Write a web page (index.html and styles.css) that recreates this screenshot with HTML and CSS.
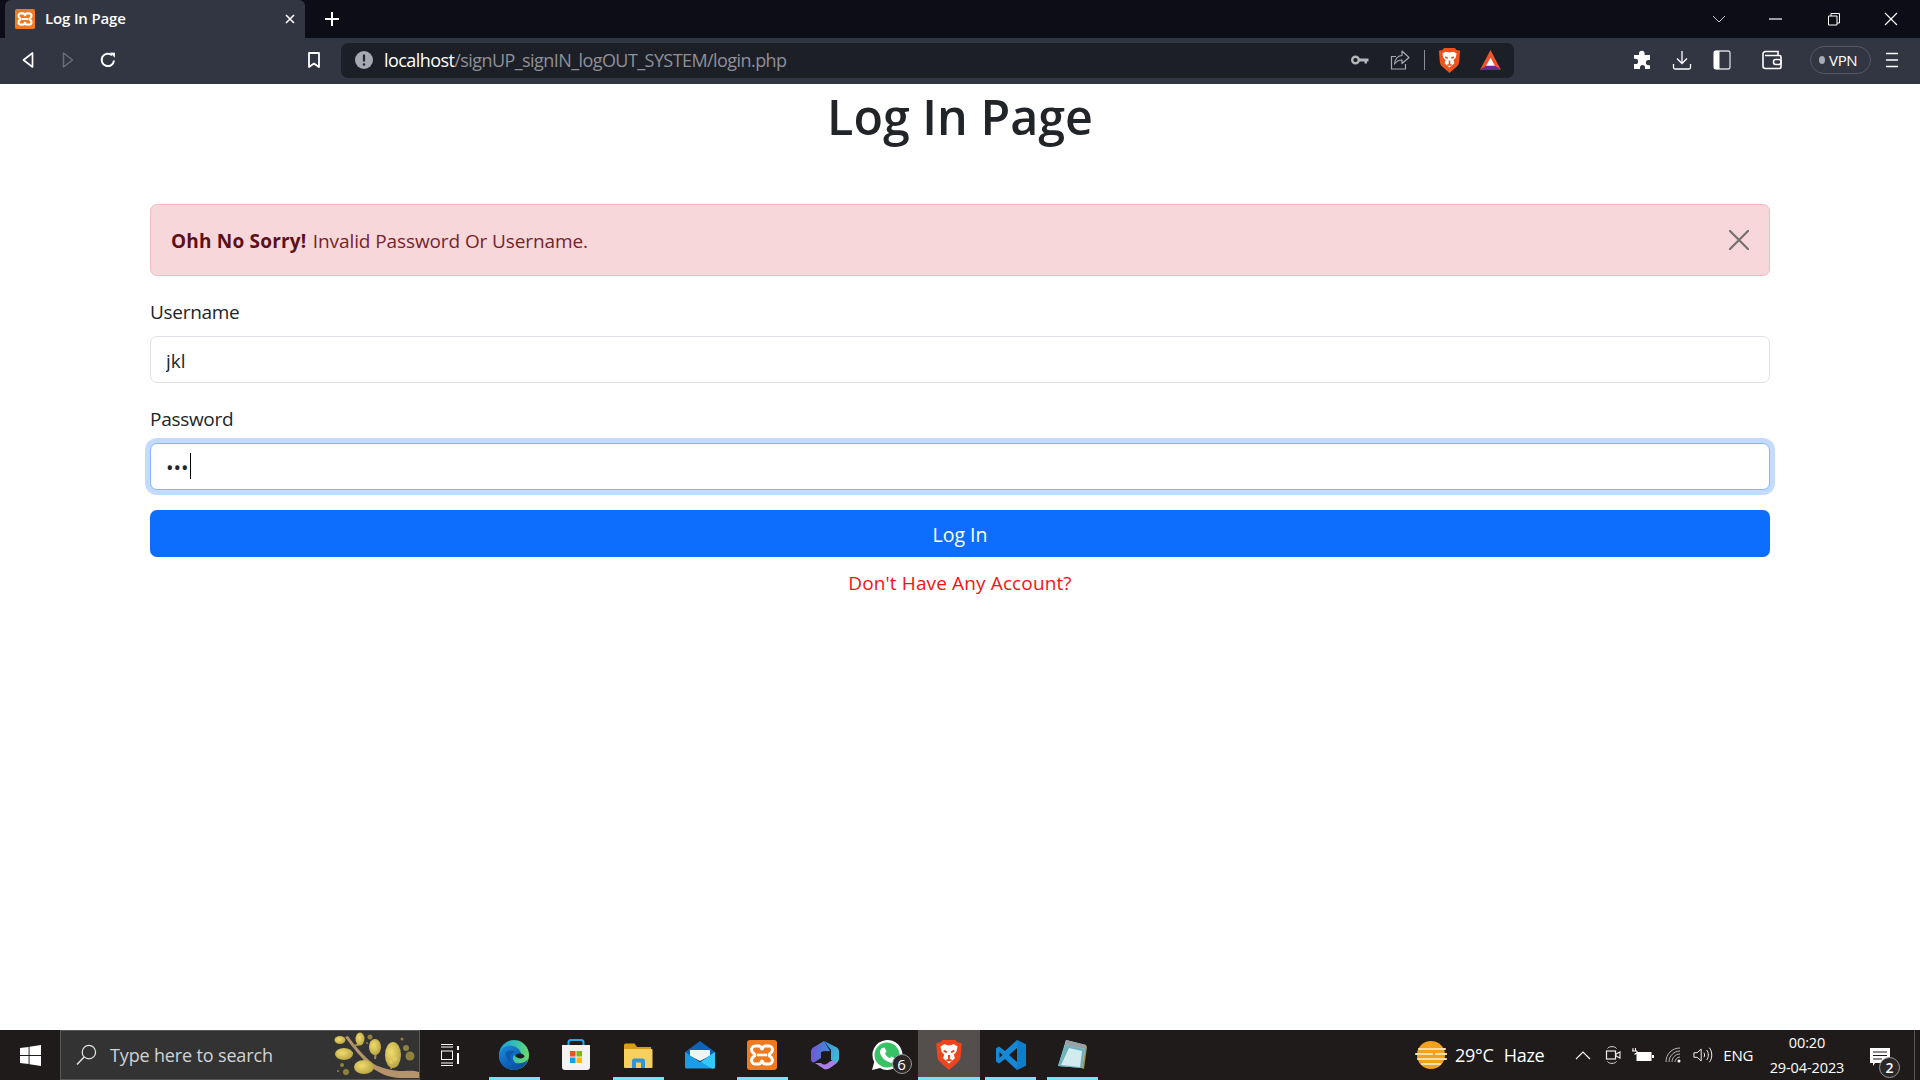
FILE: index.html
```html
<!DOCTYPE html>
<html lang="en">
<head>
<meta charset="utf-8">
<title>Log In Page</title>
<link rel="stylesheet" href="styles.css">
</head>
<body>
<div class="screen">
  <header class="tabstrip">
    <div class="tab">
      <svg class="tab-fav" viewBox="0 0 32 32"><rect width="32" height="32" rx="3" fill="#ef7a20"/><path d="M9 7h4c2.500 0 2 3 3 3s.5-3 3-3h4c3 0 4 3 3 5.500-.8 2-3 2-3 3.500s2.200 1.500 3 3.500c1 2.500 0 5.500-3 5.500h-4c-2.500 0-2-3-3-3s-.5 3-3 3H9c-3 0-4-3-3-5.500.8-2 3-2 3-3.500s-2.200-1.500-3-3.500C5 10 6 7 9 7z" fill="none" stroke="#fff" stroke-width="3.400"/><path d="M11 16h10" stroke="#fff" stroke-width="3"/></svg>
      <span class="tab-title">Log In Page</span>
      <svg class="tab-close" viewBox="0 0 12 12"><path d="M2 2l8 8M10 2l-8 8" stroke="#fff" stroke-width="1.600" fill="none"/></svg>
    </div>
    <svg class="tab-new" viewBox="0 0 16 16"><path d="M8 1v14M1 8h14" stroke="#fff" stroke-width="2" fill="none"/></svg>
    <div class="tab-fill"></div>
    <svg class="win-ico win-chev" viewBox="0 0 14 8"><path d="M1 1l6 6 6-6" stroke="#c8c8cc" stroke-width="1" fill="none"/></svg>
    <svg class="win-ico win-min" viewBox="0 0 14 14"><path d="M0 7h13" stroke="#fff" stroke-width="1.200"/></svg>
    <svg class="win-ico win-max" viewBox="0 0 14 14"><path d="M1.500 4h8.500v9H1.500zM4 4V1.500h8.500V11H10" stroke="#fff" stroke-width="1" fill="none"/></svg>
    <svg class="win-ico win-x" viewBox="0 0 14 14"><path d="M1 1l12 12M13 1L1 13" stroke="#fff" stroke-width="1.100" fill="none"/></svg>
  </header>

  <nav class="toolbar">
    <svg class="tool tool-back" viewBox="0 0 14 18"><path d="M11.500 2v14L2.500 9z" stroke="#fff" stroke-width="1.700" fill="none" stroke-linejoin="round"/></svg>
    <svg class="tool tool-fwd" viewBox="0 0 14 18"><path d="M2.500 2v14l9-7z" stroke="#6b6e78" stroke-width="1.500" fill="none" stroke-linejoin="round"/></svg>
    <svg class="tool tool-reload" viewBox="0 0 18 18"><path d="M15 9.500A6.200 6.200 0 1 1 13 4.300" stroke="#fff" stroke-width="2" fill="none"/><path d="M11 1.500l5 .3-.2 5z" fill="#fff"/></svg>
    <svg class="tool tool-mark" viewBox="0 0 14 18"><path d="M2 2h10v14l-5-3.600L2 16z" stroke="#fff" stroke-width="1.800" fill="none" stroke-linejoin="round"/></svg>
    <div class="omnibox">
      <svg class="omni-info" viewBox="0 0 18 18"><circle cx="9" cy="9" r="9" fill="#a7a9b0"/><path d="M9 3.500v7" stroke="#24262e" stroke-width="2.200"/><circle cx="9" cy="13.500" r="1.300" fill="#24262e"/></svg>
      <span class="omni-url"><span class="omni-host">localhost</span>/signUP_signIN_logOUT_SYSTEM/login.php</span>
      <span class="omni-fill"></span>
      <svg class="omni-key" viewBox="0 0 18 12"><circle cx="4.500" cy="6" r="3.300" fill="none" stroke="#b5b6ba" stroke-width="2.400"/><path d="M8 4.500h9.500v3H16v2h-2.500v-2H8z" fill="#b5b6ba"/></svg>
      <svg class="omni-share" viewBox="0 0 20 20"><path d="M6 6.500H1.500v12.500h14v-5" stroke="#a8a9ae" stroke-width="1.200" fill="none"/><path d="M12 1l7 6.500-7 6V10c-3.500 0-5.500 1-7.500 4 .4-5 3-8 7.500-8.500z" stroke="#a8a9ae" stroke-width="1.200" fill="none" stroke-linejoin="round"/></svg>
      <span class="omni-sep"></span>
      <svg class="omni-brave" viewBox="0 0 26 30"><path d="M7 1h12l2 2 4 1-1 12c-.3 3-1.500 5-4 7l-7 6-7-6c-2.500-2-3.700-4-4-7L1 4l4-1z" fill="#f0521c"/><path d="M5 7l3.500-2 4.500 1 4.500-1L21 7l-1 5-2.500 2.500 1 3.500L13 23l-5.500-5 1-3.500L6 12z" fill="#fff"/><path d="M8 11l3 1.500M18 11l-3 1.500M13 15v5M10.500 20h5" stroke="#f0521c" stroke-width="1.800" fill="none"/></svg>
      <svg class="omni-bat" viewBox="0 0 24 24"><path d="M12 1L1 22l11-7 11 7z" fill="#f0542a"/><path d="M1 22l11-7 11 7z" fill="#662d91"/><path d="M12 9l-4.500 8.500h9z" fill="#fff"/></svg>
    </div>
    <svg class="tool tool-puzzle" viewBox="0 0 18 20"><path d="M6 3.500a2.800 2.800 0 0 1 5.600 0V5H17v5h-1.500a2.600 2.600 0 0 0 0 5.200H17V19h-5v-1.500a2.500 2.500 0 0 0-5 0V19H1v-5h1.500a2.600 2.600 0 0 0 0-5.200H1V5h5z" fill="#fff"/></svg>
    <svg class="tool tool-dl" viewBox="0 0 20 20"><path d="M10 1v12M5 8.500l5 5 5-5M1.500 14v3.500a1.500 1.500 0 0 0 1.500 1.500h14a1.500 1.500 0 0 0 1.500-1.500V14" stroke="#fff" stroke-width="1.300" fill="none"/></svg>
    <svg class="tool tool-side" viewBox="0 0 18 20"><rect x="1" y="1" width="16" height="18" rx="2" fill="none" stroke="#d8d8dc" stroke-width="1.300"/><rect x="1" y="1" width="5.500" height="18" fill="#fff"/></svg>
    <svg class="tool tool-wallet" viewBox="0 0 20 20"><path d="M3 5.500h14.500a1.500 1.500 0 0 1 1.500 1.500v10a1.500 1.500 0 0 1-1.500 1.500h-14A2.500 2.500 0 0 1 1 16V4a2.500 2.500 0 0 1 2.500-2.500H16V5.500" fill="none" stroke="#fff" stroke-width="1.600"/><rect x="11.500" y="9.500" width="7.500" height="5" rx="2.200" fill="#323643" stroke="#fff" stroke-width="1.600"/></svg>
    <div class="vpn"><span class="vpn-dot"></span><span class="vpn-label">VPN</span></div>
    <svg class="tool tool-menu" viewBox="0 0 12 16"><path d="M0 1.500h12M0 8h12M0 14.500h12" stroke="#fff" stroke-width="1.500"/></svg>
  </nav>

  <main class="page">
    <div class="container">
      <h1 class="heading">Log In Page</h1>
      <div class="alert">
        <span class="alert-text"><strong>Ohh No Sorry!</strong> Invalid Password Or Username.</span>
        <svg class="alert-close" viewBox="0 0 20 20"><path d="M1 1l18 18M19 1L1 19" stroke="#757070" stroke-width="2.200" stroke-linecap="round" fill="none"/></svg>
      </div>
      <form class="form">
        <label class="label">Username</label>
        <input class="input" type="text" value="jkl">
        <label class="label">Password</label>
        <div class="field-focus">
          <input class="input input-focus" type="password" value="abc">
          <span class="caret"></span>
        </div>
        <button class="btn" type="button">Log In</button>
      </form>
      <a class="signup">Don't Have Any Account?</a>
    </div>
  </main>

  <footer class="taskbar">
    <div class="start">
      <svg class="start-logo" viewBox="0 0 22 22"><path d="M0 3.200L9 2v8.500H0zM10 1.800L22 0v10.500H10zM0 11.500h9V20L0 18.800zM10 11.500h12V22l-12-1.800z" fill="#fff"/></svg>
    </div>
    <div class="search">
      <svg class="search-ico" viewBox="0 0 22 22"><circle cx="13.500" cy="8" r="7" fill="none" stroke="#e5e5e5" stroke-width="1.300"/><path d="M8.500 13L1 21" stroke="#e5e5e5" stroke-width="1.500"/></svg>
      <span class="search-text">Type here to search</span>
      <svg class="search-art" viewBox="0 0 90 48">
        <defs><radialGradient id="bl" cx=".4" cy=".4" r=".7"><stop offset="0" stop-color="#efdc70"/><stop offset="1" stop-color="#b49f3c"/></radialGradient></defs>
        <path d="M16 6L19 5C24 12 30 20 42 31 48 36 60 39 70 40 78 40 84 39 90 41V47H70C58 46 50 42 42 36 32 27 24 17 16 6z" fill="#b5946c"/>
        <path d="M24 15L32 13M24 22L16 22M37 30L44 36M46 28L47 20M62 38L64 30" stroke="#a58a5c" stroke-width="2"/>
        <g fill="url(#bl)">
          <ellipse cx="11" cy="9" rx="5.500" ry="4"/><ellipse cx="31" cy="8" rx="4.500" ry="6.500"/><ellipse cx="46" cy="16" rx="6" ry="8"/><ellipse cx="15" cy="23" rx="9" ry="6"/><ellipse cx="35" cy="36" rx="10" ry="7"/><ellipse cx="64" cy="24" rx="8" ry="13"/>
        </g>
        <g fill="#e7d465" opacity=".6"><circle cx="60" cy="20" r="2.500"/><circle cx="66" cy="28" r="2.500"/><circle cx="62" cy="31" r="2"/><circle cx="44" cy="14" r="2"/><circle cx="12" cy="22" r="2"/><circle cx="32" cy="35" r="2.500"/></g>
        <g fill="#9e9040" opacity=".85"><circle cx="41" cy="6" r="2.500"/><circle cx="38" cy="12" r="1"/><circle cx="73" cy="8" r="1.500"/><circle cx="77" cy="17" r="3"/><circle cx="81" cy="25" r="4.500"/><circle cx="13" cy="34" r="2"/><circle cx="17" cy="41" r="3"/><circle cx="9" cy="40" r="1"/></g>
      </svg>
    </div>
    <svg class="taskview" viewBox="0 0 20 22"><path d="M1 .5h12M1 3h12M1 19h12M1 21.500h12" stroke="#fff" stroke-width="1"/><rect x="1.500" y="7" width="11" height="8.500" fill="none" stroke="#fff" stroke-width="1"/><path d="M18 2v4M18 9v11" stroke="#fff" stroke-width="2"/></svg>
    <div class="apps">
      <div class="app app-on">
        <svg class="app-ico" viewBox="0 0 32 32"><defs><linearGradient id="eg" x1="0" y1=".3" x2="1" y2=".5"><stop offset="0" stop-color="#1d9fe0"/><stop offset=".5" stop-color="#35c1b0"/><stop offset="1" stop-color="#6bdc68"/></linearGradient><linearGradient id="eb" x1="0" y1="0" x2=".8" y2="1"><stop offset="0" stop-color="#1a8fdc"/><stop offset=".6" stop-color="#0f62b8"/><stop offset="1" stop-color="#0d4a98"/></linearGradient></defs><circle cx="16" cy="16" r="15" fill="url(#eg)"/><path d="M1 17C2 9 9 5 15 7c5 1 8 5 8 8l-6 1c-3 1-3 6 1 8 4 1 9 0 12-4-2 7-8 11-14 11C7 31 1 25 1 17z" fill="url(#eb)"/><path d="M17 17c1-2 4-3 7-2 3 1 3 3 1 4-3 1-6 0-8-2z" fill="#1f1b1b"/><path d="M8 13c3-2 7-2 9 0-4 1-6 5-4 10-4-2-6-7-5-10z" fill="#0d4a98" opacity=".6"/></svg>
      </div>
      <div class="app">
        <svg class="app-ico" viewBox="0 0 32 32"><path d="M8.500 8V3.500C8.500 2 9.500 1 11 1h10c1.500 0 2.500 1 2.500 2.500V8" fill="none" stroke="#26a9e8" stroke-width="2"/><path d="M2 6h28v22a3 3 0 0 1-3 3H5a3 3 0 0 1-3-3z" fill="#f3f3f3"/><rect x="10" y="12" width="5.500" height="5.500" fill="#f25022"/><rect x="16.500" y="12" width="5.500" height="5.500" fill="#7fba00"/><rect x="10" y="18.500" width="5.500" height="5.500" fill="#00a4ef"/><rect x="16.500" y="18.500" width="5.500" height="5.500" fill="#ffb900"/></svg>
      </div>
      <div class="app app-on">
        <svg class="app-ico" viewBox="0 0 32 32"><path d="M2 6a1.500 1.500 0 0 1 1.500-1.500h9L15 8h14v5H2z" fill="#d99f0f"/><path d="M2 10h27.500a1 1 0 0 1 1 1v17a1 1 0 0 1-1 1H3a1 1 0 0 1-1-1z" fill="#f7cf5e"/><path d="M10 29v-7a2.500 2.500 0 0 1 2.500-2.500h8A2.500 2.500 0 0 1 23 22v7h-4v-5.500h-5V29z" fill="#2f94d8"/></svg>
      </div>
      <div class="app">
        <svg class="app-ico" viewBox="0 0 32 32"><path d="M1 13L16 2l15 11v3H1z" fill="#0f62b6"/><path d="M6 11h20v6L16 22 6 17z" fill="#f1f4f7"/><path d="M1 13l15 10 15-10v15a1.500 1.500 0 0 1-1.500 1.500h-27A1.500 1.500 0 0 1 1 28z" fill="#1c9ee6"/><path d="M31 13v15a1.500 1.500 0 0 1-1.500 1.500H28L17 23z" fill="#35c6fa"/></svg>
      </div>
      <div class="app app-on">
        <svg class="app-ico" viewBox="0 0 32 32"><rect x="1" y="1" width="30" height="30" rx="3" fill="#ef7a20"/><path d="M9 7h4c2.500 0 2 3 3 3s.5-3 3-3h4c3 0 4 3 3 5.500-.8 2-3 2-3 3.500s2.200 1.500 3 3.500c1 2.500 0 5.500-3 5.500h-4c-2.500 0-2-3-3-3s-.5 3-3 3H9c-3 0-4-3-3-5.500.8-2 3-2 3-3.500s-2.200-1.500-3-3.500C5 10 6 7 9 7z" fill="none" stroke="#fff" stroke-width="3"/><path d="M11 16h10" stroke="#fff" stroke-width="2.600"/></svg>
      </div>
      <div class="app">
        <svg class="app-ico" viewBox="0 0 32 32"><defs><linearGradient id="m1" x1="0" y1="0" x2="1" y2="0"><stop offset="0" stop-color="#7258d6"/><stop offset="1" stop-color="#3c8bd9"/></linearGradient><linearGradient id="m2" x1="0" y1="0" x2="1" y2="1"><stop offset="0" stop-color="#3b8ed8"/><stop offset="1" stop-color="#40c3d8"/></linearGradient></defs><path d="M15 2L27 8c2 1 3 2.500 3 5v6c0 2.500-1 4-3 5l-5-3V11z" fill="url(#m2)"/><path d="M15 2L5 8c-2 1-3 2.500-3 5v7c0 3 2 4 4 3l6-4v-6l9-1z" fill="url(#m1)"/><path d="M6 24l9 6c2 1 4 0 6-1l7-5c-3-3-6-3-9 0-3 2-5 2-7 0z" fill="#a97fe6"/><path d="M12 16a4 4 0 0 1 8 0 4 4 0 0 1-8 0z" fill="#1f1b1b"/></svg>
      </div>
      <div class="app">
        <svg class="app-ico" viewBox="0 0 32 32"><path d="M1 31l2.200-8A15 15 0 1 1 9 29z" fill="#fff"/><circle cx="16" cy="16" r="12.500" fill="#37c266"/><path d="M11 9l2.500-.5 2 4-1.500 2c1 2 2.500 3.500 4.500 4.500l2-1.500 4 2-.5 2.500c-1 1.500-3 2-5 1.500-5-1.500-8.500-5-10-9.500-.5-2 .8-4 2-5z" fill="#fff"/></svg>
        <span class="badge">6</span>
      </div>
      <div class="app app-on app-active">
        <svg class="app-ico" viewBox="0 0 26 30"><path d="M7 1h12l2 2 4 1-1 12c-.3 3-1.500 5-4 7l-7 6-7-6c-2.500-2-3.700-4-4-7L1 4l4-1z" fill="#f0451c"/><path d="M5 7l3.500-2 4.500 1 4.500-1L21 7l-1 5-2.500 2.500 1 3.500L13 23l-5.500-5 1-3.500L6 12z" fill="#fff"/><path d="M8 11l3 1.500M18 11l-3 1.500M13 15v5M10.500 20h5" stroke="#f0451c" stroke-width="1.800" fill="none"/></svg>
      </div>
      <div class="app app-on">
        <svg class="app-ico" viewBox="0 0 32 32"><path fill-rule="evenodd" d="M22 1l9 4.500v21L22 31 10 20l-6 4.500-3-2v-13l3-2L10 12zM22 9l-8 7 8 7zM4.500 13v6l3-3z" fill="#1689d6"/><path d="M22 1l9 4.500v21L22 31z" fill="#0c7ecb"/></svg>
      </div>
      <div class="app app-on">
        <svg class="app-ico" viewBox="0 0 32 32"><path d="M29 6l1 2-3 22-3-1z" fill="#a98f4c"/><path d="M9 1l20 5-4 23L1 27z" fill="#a9dbe0"/><path d="M9 1l20 5-.8 4L8 6z" fill="#9aa0a5"/><path d="M8 6l20 4-3 19L1 27z" fill="#6fb0ba"/><path d="M4 26l8-17 13 3-2 16z" fill="#d1ecef"/></svg>
      </div>
    </div>
    <div class="task-fill"></div>
    <div class="weather">
      <svg class="weather-ico" viewBox="0 0 32 32"><circle cx="16" cy="16" r="14" fill="#f4a11d"/><path d="M4 10h26M1 15h16M21 15h11M3 20h28M7 25h18" stroke="#f5dfa8" stroke-width="2.200" stroke-linecap="round"/></svg>
      <span class="weather-temp">29°C</span>
      <span class="weather-text">Haze</span>
    </div>
    <svg class="tray tray-chev" viewBox="0 0 16 9"><path d="M1 8l7-7 7 7" stroke="#fff" stroke-width="1.100" fill="none"/></svg>
    <svg class="tray tray-meet" viewBox="0 0 16 20"><path d="M2.500 3.500C4 1 10 1 11.500 3.500M2.500 16.500C4 19 10 19 11.500 16.500" stroke="#ddd" stroke-width="1" fill="none"/><rect x="1.500" y="6" width="9" height="8" fill="none" stroke="#eee" stroke-width="1.200"/><path d="M11 9l4-2v6l-4-2z" fill="none" stroke="#eee" stroke-width="1.100"/></svg>
    <svg class="tray tray-batt" viewBox="0 0 22 14"><path d="M1 0v3M3.500 0v3M0 3h5v2.500H3V7" stroke="#fff" stroke-width="1" fill="none"/><rect x="4.500" y="4" width="15" height="9" fill="#fff"/><rect x="20" y="7" width="2" height="3" fill="#fff"/></svg>
    <svg class="tray tray-wifi" viewBox="0 0 18 16"><path d="M1 15C1 7 7 1 15 1M4 15c0-6 5-11 11-11M7 15c0-4 3-8 8-8M10 15c0-2 2-5 5-5" stroke="#b7b7b7" stroke-width="1" fill="none"/><circle cx="14" cy="14" r="1.500" fill="#fff"/></svg>
    <svg class="tray tray-vol" viewBox="0 0 22 18"><path d="M1 6.500h3.500L9 2.500v13l-4.500-4H1z" fill="none" stroke="#eee" stroke-width="1.100"/><path d="M12 6.500c1 1.500 1 3.500 0 5M15 3.500c2.500 3 2.500 8 0 11M18 1c3.500 4 3.500 12 0 16" stroke="#eee" stroke-width="1.100" fill="none"/></svg>
    <span class="tray-lang">ENG</span>
    <div class="clock"><span>00:20</span><span>29-04-2023</span></div>
    <div class="notif">
      <svg class="notif-ico" viewBox="0 0 20 18"><path d="M0 0h20v15H5l-2 3v-3H0z" fill="#fff"/><path d="M3 4h14M3 7.500h14M3 11h9" stroke="#1f1b1b" stroke-width="1"/></svg>
      <span class="notif-badge">2</span>
    </div>
    <span class="peek"></span>
  </footer>
</div>
</body>
</html>
```
FILE: styles.css
```css
* { box-sizing: border-box; }
html, body { margin: 0; height: 100%; background: #fff; }
body { font-family: "Open Sans", "Noto Sans", sans-serif; color: #212529; overflow: hidden; }
.screen { display: flex; flex-direction: column; height: 1080px; width: 1920px; }

/* tab strip */
.tabstrip { height: 38px; background: #0c0d17; display: flex; align-items: center; flex: none; }
.tab { margin-left: 5px; width: 300px; height: 38px; background: #323643; border-radius: 6px 6px 0 0; display: flex; align-items: center; padding-left: 10px; flex: none; }
.tab-fav { width: 20px; height: 20px; flex: none; }
.tab-title { margin: -2px 0 0 10px; font-size: 15px; font-weight: 600; color: #fff; flex: 1; letter-spacing: -.15px; }
.tab-close { width: 12px; height: 12px; margin-right: 9px; flex: none; }
.tab-new { width: 16px; height: 16px; margin-left: 19px; flex: none; }
.tab-fill { flex: 1; }
.win-ico { flex: none; }
.win-chev { width: 14px; height: 8px; margin-right: 43px; }
.win-min { width: 14px; height: 14px; margin-right: 44px; }
.win-max { width: 14px; height: 14px; margin-right: 43px; }
.win-x { width: 14px; height: 14px; margin-right: 22px; }

/* toolbar */
.toolbar { height: 46px; background: #323643; display: flex; align-items: center; flex: none; padding-bottom: 2px; }
.tool { flex: none; }
.tool-back { width: 14px; height: 18px; margin-left: 21px; }
.tool-fwd { width: 14px; height: 18px; margin-left: 26px; }
.tool-reload { width: 18px; height: 18px; margin-left: 24px; }
.tool-mark { width: 14px; height: 18px; margin-left: 190px; }
.omnibox { width: 1173px; height: 35px; margin-left: 20px; background: #1d1f27; border-radius: 7px; display: flex; align-items: center; padding-left: 14px; flex: none; }
.omni-info { width: 18px; height: 18px; flex: none; }
.omni-url { margin-left: 11px; font-size: 18px; color: #8f9097; letter-spacing: -.57px; white-space: nowrap; }
.omni-host { color: #fff; }
.omni-fill { flex: 1; }
.omni-key { width: 18px; height: 12px; flex: none; }
.omni-share { width: 20px; height: 20px; margin-left: 21px; flex: none; }
.omni-sep { width: 1px; height: 20px; background: #8d8e94; margin-left: 14px; flex: none; }
.omni-brave { width: 23px; height: 27px; margin-left: 13px; flex: none; }
.omni-bat { width: 23px; height: 23px; margin-left: 18px; margin-right: 12px; flex: none; }
.tool-puzzle { width: 18px; height: 20px; margin-left: 119px; }
.tool-dl { width: 20px; height: 20px; margin-left: 21px; }
.tool-side { width: 18px; height: 20px; margin-left: 21px; }
.tool-wallet { width: 20px; height: 20px; margin-left: 31px; }
.vpn { margin-left: 28px; width: 61px; height: 28px; border: 1.500px solid #555967; border-radius: 14px; display: flex; align-items: center; padding-left: 8px; flex: none; }
.vpn-dot { width: 6px; height: 8px; border-radius: 50%; background: #a9abb3; flex: none; }
.vpn-label { margin-left: 4px; font-size: 15px; color: #fff; letter-spacing: -.3px; }
.tool-menu { width: 12px; height: 16px; margin-left: 15px; }

/* page */
.page { flex: 1; background: #fff; }
.container { margin: 0 150px; text-align: center; }
.heading { margin: 2px 0 58px; height: 60px; font-size: 48.400px; line-height: 60px; font-weight: 600; color: #212529; }
.alert { height: 72px; background: #f8d7da; border: 1px solid #f5b9c0; border-radius: 7px; display: flex; align-items: center; padding: 0 20px; text-align: left; margin-bottom: 20px; }
.alert-text { flex: 1; padding-top: 2px; font-size: 19px; letter-spacing: -.1px; word-spacing: 0; color: #74242c; }
.alert-text strong { font-weight: 700; color: #5a1118; letter-spacing: .2px; margin-right: 1.500px; }
.alert-close { width: 20px; height: 20px; flex: none; }
.form { display: flex; flex-direction: column; text-align: left; }
.label { height: 32px; line-height: 32px; font-size: 19px; letter-spacing: -.3px; margin-bottom: 8px; color: #212529; }
.input { display: block; width: 100%; height: 47px; margin-bottom: 20px; padding: 2px 15px 0; font-family: inherit; font-size: 19px; color: #212529; background: #fff; border: 1px solid #dee2e6; border-radius: 7px; outline: none; }
.field-focus { position: relative; }
.input-focus { border-color: #86b7fe; box-shadow: 0 0 0 5px #c2dbfe; font-size: 20px; }
.caret { position: absolute; left: 40px; top: 10px; width: 1px; height: 26px; background: #000; }
.btn { height: 47px; background: #0d6efd; color: #fff; border: 0; border-radius: 7px; font-family: inherit; font-size: 19.500px; padding: 2px 0 0; }
.signup { display: block; margin-top: 11px; line-height: 30px; font-size: 19px; letter-spacing: .13px; color: #f01414; }

/* taskbar */
.taskbar { height: 50px; background: #1f1b1b; display: flex; align-items: center; flex: none; color: #fff; }
.start { width: 60px; height: 50px; display: flex; align-items: center; justify-content: center; flex: none; }
.start-logo { width: 21px; height: 21px; }
.search { width: 360px; height: 50px; background: #333; border: 1px solid #575757; display: flex; align-items: center; flex: none; padding-left: 15px; }
.search-ico { width: 21px; height: 22px; flex: none; }
.search-text { margin-left: 13px; font-size: 18px; color: #d0d3d6; flex: 1; letter-spacing: -.15px; }
.search-art { width: 90px; height: 48px; flex: none; }
.taskview { width: 20px; height: 22px; margin-left: 20px; flex: none; }
.apps { display: flex; margin-left: 23px; flex: none; height: 50px; }
.app { width: 62.100px; height: 50px; display: flex; align-items: center; justify-content: center; position: relative; }
.app-ico { width: 32px; height: 32px; }
.app-on::after { content: ""; position: absolute; left: 5.500px; right: 5.500px; bottom: 0; height: 3px; background: #76e3fb; }
.app-active { background: #544e4d; }
.app-active::after { left: 0; right: 0; }
.badge { position: absolute; left: 36px; top: 24px; width: 20px; height: 20px; border-radius: 50%; background: #2a2626; border: 1px solid #9a9a9a; font-size: 15px; line-height: 18px; text-align: center; color: #fff; }
.task-fill { flex: 1; }
.weather { display: flex; align-items: center; flex: none; font-size: 18px; }
.weather-ico { width: 32px; height: 32px; }
.weather-temp { margin-left: 8px; letter-spacing: -.2px; }
.weather-text { margin-left: 10px; letter-spacing: -.3px; }
.tray { flex: none; }
.tray-chev { width: 16px; height: 9px; margin-left: 31px; }
.tray-meet { width: 16px; height: 20px; margin-left: 14px; }
.tray-batt { width: 22px; height: 14px; margin-left: 11px; }
.tray-wifi { width: 18px; height: 16px; margin-left: 11px; }
.tray-vol { width: 20px; height: 18px; margin-left: 10px; }
.tray-lang { margin-left: 10px; font-size: 15px; color: #fff; letter-spacing: -.3px; }
.clock { margin-left: 13px; width: 82px; display: flex; flex-direction: column; align-items: center; font-size: 14.500px; line-height: 25px; color: #fff; flex: none; letter-spacing: -.1px; }
.notif { position: relative; margin-left: 20px; width: 30px; height: 34px; flex: none; }
.notif-ico { position: absolute; left: 2px; top: 10px; width: 20px; height: 18px; }
.notif-badge { position: absolute; left: 11px; top: 19px; width: 21px; height: 21px; border-radius: 50%; background: #2b2727; border: 1px solid #999; font-size: 14px; font-weight: 600; line-height: 19px; text-align: center; }
.peek { margin-left: 16px; width: 1px; height: 50px; background: #5a5654; flex: none; margin-right: 5px; }
```
